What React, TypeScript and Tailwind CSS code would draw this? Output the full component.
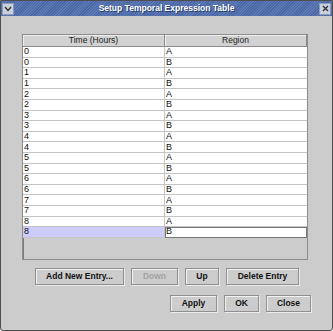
const rows: [string, string][] = [
  ['0', 'A'], ['0', 'B'], ['1', 'A'], ['1', 'B'], ['2', 'A'], ['2', 'B'],
  ['3', 'A'], ['3', 'B'], ['4', 'A'], ['4', 'B'], ['5', 'A'], ['5', 'B'],
  ['6', 'A'], ['6', 'B'], ['7', 'A'], ['7', 'B'], ['8', 'A'], ['8', 'B'],
]

function Button({ label, w, disabled }: { label: string; w: string; disabled?: boolean }) {
  return (
    <button
      className={`${w} h-[17px] border border-[#8f8f8f] bg-[#cccccc] shadow-[inset_1px_1px_0_#f2f2f2,1px_1px_0_#ececec] text-[8.5px] font-bold leading-none whitespace-nowrap ${
        disabled ? 'text-[#a3a3a3]' : 'text-[#111]'
      }`}
    >
      {label}
    </button>
  )
}

export default function App() {
  const font = { fontFamily: '"Liberation Sans", Arial, sans-serif' }
  return (
    <div
      style={font}
      className="w-[333px] h-[331px] flex flex-col bg-[#cccccc] border border-[#4d4d4d] rounded-b-[3px] overflow-hidden"
    >
      {/* title bar */}
      <div className="h-[15px] flex items-center justify-between px-[1px] bg-[repeating-linear-gradient(135deg,#5c79b5_0px,#5c79b5_1px,#4c68a4_1px,#4c68a4_2px)]">
        <div className="w-[12px] h-[12px] flex items-center justify-center bg-[#c9d0de] border border-[#8d9ab8]">
          <svg width="8" height="6" viewBox="0 0 8 6">
            <path d="M1 1 L4 4.5 L7 1" stroke="#333" strokeWidth="1.4" fill="none" />
          </svg>
        </div>
        <span className="text-[8.5px] font-bold text-white [text-shadow:1px_1px_0_#2b3d66] leading-none">
          Setup Temporal Expression Table
        </span>
        <div className="w-[12px] h-[12px] flex items-center justify-center bg-[#c9d0de] border border-[#8d9ab8]">
          <svg width="7" height="7" viewBox="0 0 7 7">
            <path d="M1 1 L6 6 M6 1 L1 6" stroke="#333" strokeWidth="1.4" />
          </svg>
        </div>
      </div>

      <div className="flex-1 flex flex-col px-[21px] pt-[18px]">
        {/* scroll pane */}
        <div className="w-[286px] h-[226px] border border-[#8c8c8c] bg-[#cccccc] shadow-[inset_1px_1px_0_#7a7a7a]">
          <div className="grid grid-cols-[142px_1fr] h-[12px] text-[8.5px] text-[#222] leading-none">
            <div className="flex items-center justify-center border-r border-b border-[#8a8a8a] bg-[#d2d2d2] shadow-[inset_1px_1px_0_#eeeeee]">
              Time (Hours)
            </div>
            <div className="flex items-center justify-center border-b border-r border-[#8a8a8a] bg-[#d2d2d2] shadow-[inset_1px_1px_0_#eeeeee]">
              Region
            </div>
          </div>
          <div className="flex flex-col text-[9px] text-[#111] leading-none">
            {rows.map(([t, r], i) => {
              const last = i === rows.length - 1
              return (
                <div key={i} className="grid grid-cols-[142px_1fr] h-[10.6px]">
                  <div
                    className={`flex items-center pl-[1px] border-r border-b border-[#c4c4c4] ${
                      last ? 'bg-[#ccccff]' : 'bg-white'
                    }`}
                  >
                    {t}
                  </div>
                  <div
                    className={`flex items-center pl-[1px] border-b border-[#c4c4c4] bg-white ${
                      last ? 'outline outline-1 -outline-offset-1 outline-[#777]' : ''
                    }`}
                  >
                    {r}
                  </div>
                </div>
              )
            })}
          </div>
        </div>

        <div className="flex justify-center gap-[7px] mt-[8px] pl-[1px]">
          <Button label="Add New Entry..." w="w-[89px]" />
          <Button label="Down" w="w-[47px]" disabled />
          <Button label="Up" w="w-[34px]" />
          <Button label="Delete Entry" w="w-[73px]" />
        </div>

        <div className="flex justify-end gap-[7px] mt-[10px]">
          <Button label="Apply" w="w-[47px]" />
          <Button label="OK" w="w-[35px]" />
          <Button label="Close" w="w-[45px]" />
        </div>
      </div>
    </div>
  )
}
